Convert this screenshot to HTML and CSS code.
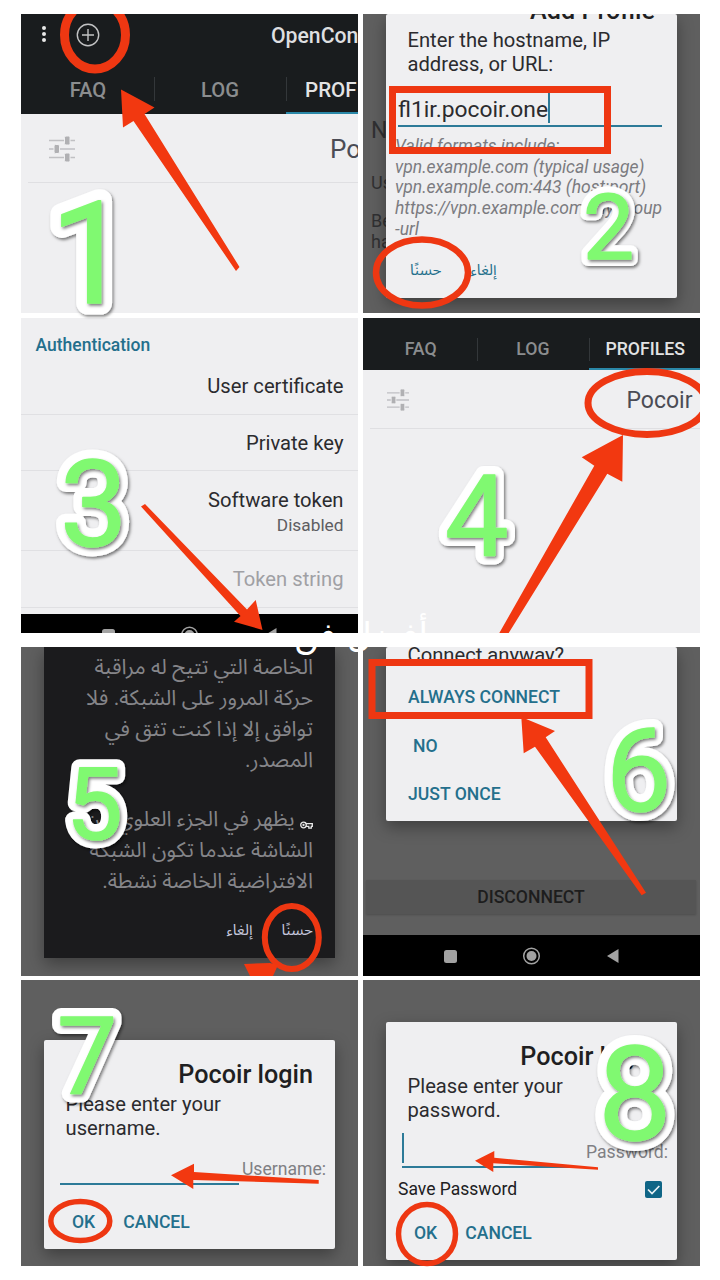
FILE: index.html
```html
<!DOCTYPE html>
<html lang="en">
<head>
<meta charset="utf-8">
<title>OpenConnect setup guide</title>
<link rel="stylesheet" href="styles.css">
</head>
<body>
<svg class="defs" width="0" height="0">
  <defs>
    <symbol id="tune" viewBox="0 0 26 26">
      <path d="M0 4.5h26M0 13h26M0 21.5h26" stroke="#c0c0c3" stroke-width="1.6"/>
      <rect x="15.500" y="0" width="5.500" height="9" rx="1.5" fill="#b0b0b3" stroke="#efeff1"/>
      <rect x="5" y="8.5" width="5.500" height="9" rx="1.5" fill="#b0b0b3" stroke="#efeff1"/>
      <rect x="15.500" y="17" width="5.500" height="9" rx="1.5" fill="#b0b0b3" stroke="#efeff1"/>
    </symbol>
    <symbol id="nav" viewBox="0 0 180 20">
      <rect x="4" y="4" width="13" height="13" rx="2.5" fill="#a2a2a2"/>
      <circle cx="91.5" cy="10" r="7.8" fill="none" stroke="#a2a2a2" stroke-width="1.5"/>
      <circle cx="91.5" cy="10" r="5" fill="#a2a2a2"/>
      <path d="M167 10 178.500 3v14z" fill="#a2a2a2"/>
    </symbol>
  </defs>
</svg>
<main class="board">
  <section class="panel light p1">
    <header class="appbar">
      <svg class="more" width="6" height="18" viewBox="0 0 6 18"><g fill="#e8e8e8"><circle cx="3" cy="3" r="2"/><circle cx="3" cy="9" r="2"/><circle cx="3" cy="15" r="2"/></g></svg>
      <svg class="add" width="24" height="24" viewBox="0 0 24 24" fill="none" stroke="#c2c3c4" stroke-width="1.4"><circle cx="12" cy="12" r="10.7"/><path d="M12 6v12M6 12h12"/></svg>
      <h1 class="apptitle">OpenCon</h1>
    </header>
    <nav class="tabs"><span class="tab">FAQ</span><span class="tab">LOG</span><span class="tab on">PROF</span></nav>
    <div class="profile"><svg class="tune"><use href="#tune"/></svg><span>Po</span></div>
  </section>

  <section class="panel dim p2">
    <div class="behind"><p class="b1">N</p><p class="b2">Us</p><p class="b3">Be<br>ha</p></div>
    <div class="dialog">
      <h2>Add Profile</h2>
      <p class="msg">Enter the hostname, IP<br>address, or URL:</p>
      <div class="field"><span>fl1ir.pocoir.one</span><i class="caret"></i></div>
      <p class="hint">Valid formats include:<br>vpn.example.com (typical usage)<br>vpn.example.com:443 (host:port)<br>https://vpn.example.com/my-group<br>-url</p>
      <div class="actions ar"><span>حسنًا</span><span>إلغاء</span></div>
    </div>
  </section>

  <section class="panel light p3">
    <h3>Authentication</h3>
    <div class="pref first">User certificate</div>
    <div class="pref">Private key</div>
    <div class="pref tall"><span>Software token</span><small>Disabled</small></div>
    <div class="pref off">Token string</div>
    <div class="navbar"><svg><use href="#nav"/></svg></div>
  </section>

  <section class="panel light p4">
    <nav class="tabs"><span class="tab">FAQ</span><span class="tab">LOG</span><span class="tab on">PROFILES</span></nav>
    <div class="profile"><svg class="tune"><use href="#tune"/></svg><span>Pocoir</span></div>
  </section>

  <section class="panel dim p5">
    <div class="dialog dark" dir="rtl">
      <p>الخاصة التي تتيح له مراقبة</p>
      <p>حركة المرور على الشبكة. فلا</p>
      <p>توافق إلا إذا كنت تثق في</p>
      <p>المصدر.</p>
      <p class="para"><svg class="key" width="13" height="8" viewBox="0 0 13 8" fill="none" stroke="#e8e8e8" stroke-width="1.300"><circle cx="3.500" cy="4" r="2.800"/><circle cx="3.500" cy="4" r=".5"/><path d="M5.800 2.700H12.300v2.600h-1v1.800H8.800V5.300H5.800"/></svg> يظهر في الجزء العلوي من</p>
      <p>الشاشة عندما تكون الشبكة</p>
      <p>الافتراضية الخاصة نشطة.</p>
      <div class="actions ar"><span>حسنًا</span><span>إلغاء</span></div>
    </div>
  </section>

  <section class="panel dim p6">
    <div class="dialog">
      <p class="msg">Connect anyway?</p>
      <div class="choice">ALWAYS CONNECT</div>
      <div class="choice no">NO</div>
      <div class="choice">JUST ONCE</div>
    </div>
    <div class="disconnect">DISCONNECT</div>
    <div class="navbar"><svg><use href="#nav"/></svg></div>
  </section>

  <section class="panel dim p7">
    <div class="dialog">
      <h2>Pocoir login</h2>
      <p class="msg">Please enter your<br>username.</p>
      <div class="entry"><i class="line"></i><label>Username:</label></div>
      <div class="actions"><span>OK</span><span>CANCEL</span></div>
    </div>
  </section>

  <section class="panel dim p8">
    <div class="dialog">
      <h2>Pocoir login</h2>
      <p class="msg">Please enter your<br>password.</p>
      <div class="entry"><i class="caret"></i><i class="line"></i><label>Password:</label></div>
      <div class="save"><span>Save Password</span><svg width="17" height="17" viewBox="0 0 17 17"><rect width="17" height="17" rx="2" fill="#0f6586"/><path d="m3 8.500 4 4L14.300 5" fill="none" stroke="#e9f2f5" stroke-width="1.700"/></svg></div>
      <div class="actions"><span>OK</span><span>CANCEL</span></div>
    </div>
  </section>
</main>

<svg class="marks" width="720" height="1280" viewBox="0 0 720 1280">
  <defs>
    <clipPath id="c1"><rect x="21" y="14" width="337" height="299"/></clipPath>
    <clipPath id="c4"><rect x="363" y="318" width="337" height="315"/></clipPath>
    <filter id="soft" x="-30%" y="-30%" width="160%" height="160%"><feDropShadow dx="1.500" dy="2" stdDeviation="1.500" flood-color="#000" flood-opacity=".5"/></filter>
    <g id="digits">
      <text x="50" y="303" font-size="142" stroke-width="23">1</text>
      <text x="583" y="259" font-size="91" stroke-width="14">2</text>
      <text x="60" y="545.500" font-size="120" stroke-width="19">3</text>
      <text x="445" y="555.500" font-size="113" stroke-width="18">4</text>
      <text x="66" y="839" font-size="101" stroke-width="17">5</text>
      <text x="606" y="810.500" font-size="116" stroke-width="18">6</text>
      <text x="57" y="1093.500" font-size="107" stroke-width="18">7</text>
      <text x="598" y="1140" font-size="131" stroke-width="20">8</text>
    </g>
    <g id="faces">
      <text x="50" y="303" font-size="142">1</text>
      <text x="583" y="259" font-size="91">2</text>
      <text x="60" y="545.500" font-size="120">3</text>
      <text x="445" y="555.500" font-size="113">4</text>
      <text x="66" y="839" font-size="101">5</text>
      <text x="606" y="810.500" font-size="116">6</text>
      <text x="57" y="1093.500" font-size="107">7</text>
      <text x="598" y="1140" font-size="131">8</text>
    </g>
  </defs>
  <text class="caption" x="361" y="647" text-anchor="middle">أفضل فن</text>
  <g class="ring">
    <ellipse cx="95" cy="35" rx="30.500" ry="34" stroke-width="9" clip-path="url(#c1)"/>
    <rect x="392.500" y="89.500" width="215" height="61" stroke-width="7"/>
    <ellipse cx="422" cy="272.500" rx="46" ry="33" stroke-width="6.500"/>
    <ellipse cx="647" cy="403" rx="59" ry="31.500" stroke-width="7" clip-path="url(#c4)"/>
    <ellipse cx="291.800" cy="937.500" rx="27" ry="31.500" stroke-width="6"/>
    <rect x="372" y="662.500" width="217" height="53" stroke-width="7"/>
    <ellipse cx="80.300" cy="1221" rx="29.500" ry="19.500" stroke-width="5.500"/>
    <ellipse cx="427" cy="1234" rx="28.500" ry="29.500" stroke-width="5.500"/>
  </g>
  <g class="arrow">
    <path d="M121 89.500 154.500 107.500 144.500 114 239.500 267 236 271 133.500 121 123 127.500z"/>
    <path d="M141 506.500 145 504 247 609.500 255.700 600 262.500 630 234 621.700 240.500 616z"/>
    <path d="M623 435 581.700 457.300 594.300 465.700 499.300 633H508.700L607.300 473.700 622.300 481.700z"/>
    <path d="M244 964 270 963 278 965 273 976H250z"/>
    <path d="M521.300 717 555 731 545.700 737.300 646 892.700 641.700 895.300 535 746.700 523.700 753.300z"/>
    <path d="M171 1175.300 194 1163.700V1172L318.700 1180V1183.700L193.300 1180V1189z"/>
    <path d="M475 1160.700 494.300 1151V1157.700L598 1167.300V1169.700L493.300 1163.300V1172z"/>
  </g>
  <use href="#digits" class="outline" filter="url(#soft)"/>
  <use href="#faces" class="fill" filter="url(#soft)"/>
</svg>
</body>
</html>
```
FILE: styles.css
```css
* { box-sizing: border-box; }
body { margin: 0; background: #fff; font-family: Roboto, "Noto Sans Arabic", "DejaVu Sans", sans-serif; color: #2b2b2e; }
h1, h2, h3, p { margin: 0; font-weight: 400; }
.defs { display: block; height: 0; }
.board {
  display: grid;
  grid-template-columns: 337px 337px;
  grid-template-rows: 299px 5px 315px 14px 329px 4px 285.5px;
  column-gap: 5px;
  padding: 14px 0 0 21px;
}
.p1, .p2 { grid-row: 1; }
.p3, .p4 { grid-row: 3; }
.p5, .p6 { grid-row: 5; }
.p7, .p8 { grid-row: 7; }
.panel { position: relative; overflow: hidden; min-width: 0; display: flex; flex-direction: column; white-space: nowrap; }
.light { background: #efeff1; }
.dim { background: #5f5f5f; }

/* app bar and tabs */
.appbar { background: #191c1e; height: 49px; flex: none; display: flex; padding: 7px 0 0 20px; }
.appbar > * { flex: none; }
.more { margin-top: 4px; }
.add { margin: 2px 0 0 29px; }
.apptitle { margin-left: 171px; font-size: 21.200px; line-height: 29px; font-weight: 500; color: #dedfe0; }
.tabs { background: #191c1e; flex: none; display: flex; }
.tab { flex: none; text-align: center; color: #8b8d8f; font-weight: 500; position: relative; }
.tab + .tab::before { content: ""; position: absolute; left: 0; width: 1px; background: #33373a; }
.tab.on { color: #e2e3e4; border-bottom: 2.5px solid #2a88a8; }
.p1 .tabs { height: 51px; padding-left: 1px; }
.p1 .tab { width: 132px; font-size: 20.200px; line-height: 55px; }
.p1 .tab.on { width: 72px; text-align: left; padding-left: 19px; font-size: 20.600px; }
.p1 .tab::before { top: 14px; height: 24px; }
.profile { display: flex; align-items: center; flex: none; color: #4b4c55; border-bottom: 1px solid #dfdfe2; }
.p1 .profile { height: 69px; margin-left: 7px; padding: 1px 0 0 21px; font-size: 26px; }
.p1 .profile span { margin-left: 255px; }
.p1 .tune { width: 26px; height: 26px; flex: none; }
.p4 .tabs { height: 52px; padding-left: 1.500px; }
.p4 .tab { width: 112.300px; font-size: 17.700px; line-height: 63px; }
.p4 .tab::before { top: 20px; height: 23px; }
.p4 .profile { height: 59px; margin-left: 7px; padding: 2px 7.500px 0 17px; justify-content: space-between; font-size: 23px; }
.p4 .tune { width: 22px; height: 22px; }

/* dialogs */
.dialog { background: #efeff1; width: 291px; margin-left: 23px; flex: none; border-radius: 2px; box-shadow: 0 6px 16px rgba(0,0,0,.35); }
.dialog h2 { font-size: 25.200px; line-height: 30px; font-weight: 500; text-align: right; padding-right: 22px; color: #1f1f22; }
.msg { font-size: 20.200px; line-height: 24px; padding-left: 21.500px; }
.actions { display: flex; color: #246f8c; font-weight: 500; font-size: 17.600px; line-height: 22px; }

.behind { position: absolute; left: 8px; top: 0; width: 15px; color: #303032; }
.b1 { font-size: 23px; line-height: 28px; padding-top: 103px; }
.b2 { font-size: 18px; line-height: 20px; padding-top: 28px; }
.b3 { font-size: 18px; line-height: 20.500px; padding-top: 18px; }
.p2 .dialog { position: relative; height: 284px; }
.p2 h2 { margin-top: -17px; line-height: 28px; }
.p2 .msg { padding-top: 3px; }
.field { display: flex; margin: 16px 15px 0 12px; height: 35px; border-bottom: 2px solid #2c7a98; font-size: 22.800px; line-height: 36px; }
.caret { width: 2px; height: 30px; margin-top: 1px; background: #2c7a98; }
.hint { font-style: italic; font-size: 17.500px; line-height: 20.700px; color: #7b7b80; padding: 9px 0 0 9px; }
.actions.ar { font-weight: 400; font-size: 15.200px; }
.p2 .actions { padding: 19px 0 0 24px; gap: 29px; }

/* preferences */
.p3 h3 { color: #246f8c; font-weight: 500; font-size: 17.500px; line-height: 22px; padding: 16px 0 0 14.500px; height: 40px; flex: none; }
.pref { height: 56.700px; border-bottom: 1px solid #e0e0e3; padding-right: 14.500px; font-size: 20.200px; line-height: 57px; text-align: right; flex: none; }
.pref.tall { height: 80px; display: flex; flex-direction: column; padding-top: 17px; line-height: 25px; }
.tall small { font-size: 17.300px; color: #5d5d62; }
.pref.off { color: #a0a0a4; }
.navbar { background: #000; flex: none; height: 41px; display: flex; padding: 11px 0 0 77px; }
.navbar svg { width: 180px; height: 20px; }
.p3 .navbar { margin-top: 6px; }

/* vpn consent */
.dialog.dark { background: #1b1b1d; height: 311px; color: #858589; font-size: 21.300px; line-height: 31px; padding: 4px 22px 0 0; border-radius: 0; }
.para { padding-top: 28px; }
.key { margin-bottom: -3px; }
.dark .actions { padding-top: 23px; gap: 29px; color: #c5c7dc; }

/* connect prompt */
.p6 .dialog { height: 174px; }
.p6 .msg { margin-top: -4px; }
.choice { color: #246f8c; font-weight: 500; font-size: 17.600px; line-height: 24px; margin: 18px 0 24.700px 22px; }
.choice + .choice { margin-top: 0; }
.choice.no { padding-left: 5px; }
.disconnect { background: #555; margin: 59px 4px 0 3px; height: 34px; line-height: 34px; text-align: center; font-weight: 500; font-size: 17.600px; color: #1d1d1d; box-shadow: 0 1px 2px rgba(0,0,0,.2); }
.p6 .navbar { margin-top: auto; }

/* login */
.p7 .dialog { margin-top: 60px; height: 209px; padding-top: 20px; }
.p8 .dialog { margin-top: 42px; height: 238px; padding-top: 20px; }
.p7 .msg, .p8 .msg { padding-top: 2px; }
.entry { display: flex; height: 36px; font-size: 17.600px; color: #7f7f84; padding-right: 9px; margin-left: 16px; margin-top: 10px; }
.entry label { margin-left: auto; line-height: 41px; }
.line { width: 179px; height: 36px; border-bottom: 2px solid #2c7a98; }
.entry .caret + .line { margin-left: -2px; }
.p7 .entry { margin-top: 9px; }
.save { display: flex; justify-content: space-between; align-items: center; font-size: 17.500px; height: 24px; padding: 0 15px 0 12px; margin-top: 9px; color: #202022; }
.p7 .actions { padding: 26px 0 0 28px; gap: 28px; }
.p8 .actions { padding: 21px 0 0 28px; gap: 28px; }

/* hand-drawn marks over the panels */
.marks { position: absolute; left: 0; top: 0; pointer-events: none; }
.ring { fill: none; stroke: #ee3712; }
.arrow { fill: #f23810; }
.marks text { font-family: Roboto, sans-serif; }
.outline { fill: #fff; stroke: #fff; stroke-linejoin: round; }
.fill { fill: #80f971; stroke: #80f971; stroke-width: 1.500px; stroke-linejoin: round; }
.marks .caption { fill: #fff; font-family: "DejaVu Sans", sans-serif; font-size: 34px; }
```
